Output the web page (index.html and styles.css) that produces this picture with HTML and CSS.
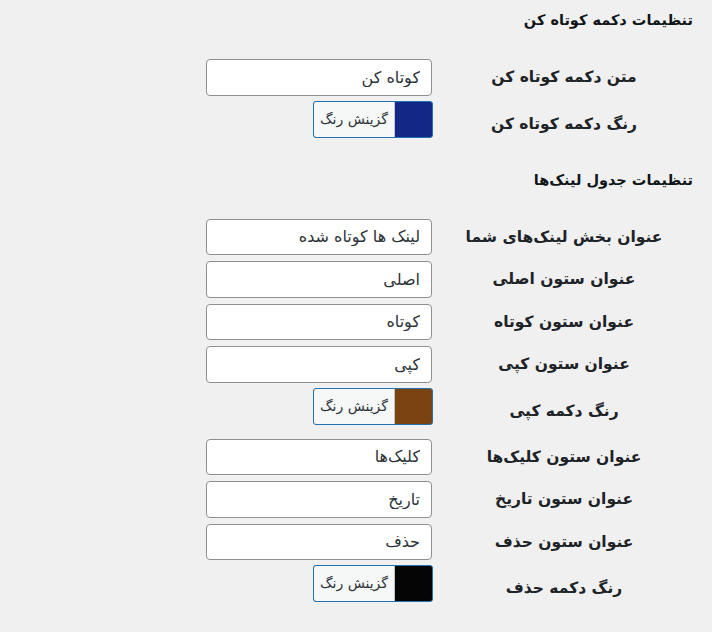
FILE: index.html
```html
<!DOCTYPE html>
<html lang="fa" dir="rtl">
<head>
<meta charset="utf-8">
<title>تنظیمات</title>
<link rel="stylesheet" href="styles.css">
</head>
<body>
<main class="settings">
  <h2 class="section-title title-first">تنظیمات دکمه کوتاه کن</h2>
  <div class="form-table">
    <div class="row">
      <label class="row-label">متن دکمه کوتاه کن</label>
      <div class="row-field"><input class="text-input" type="text" value="کوتاه کن"></div>
    </div>
    <div class="row row-color">
      <label class="row-label">رنگ دکمه کوتاه کن</label>
      <div class="row-field"><button class="color-result" type="button" style="background-color:#132787"><span class="color-result-text">گزینش رنگ</span></button></div>
    </div>
  </div>

  <h2 class="section-title title-second">تنظیمات جدول لینک‌ها</h2>
  <div class="form-table">
    <div class="row">
      <label class="row-label">عنوان بخش لینک‌های شما</label>
      <div class="row-field"><input class="text-input" type="text" value="لینک ها کوتاه شده"></div>
    </div>
    <div class="row">
      <label class="row-label">عنوان ستون اصلی</label>
      <div class="row-field"><input class="text-input" type="text" value="اصلی"></div>
    </div>
    <div class="row">
      <label class="row-label">عنوان ستون کوتاه</label>
      <div class="row-field"><input class="text-input" type="text" value="کوتاه"></div>
    </div>
    <div class="row">
      <label class="row-label">عنوان ستون کپی</label>
      <div class="row-field"><input class="text-input" type="text" value="کپی"></div>
    </div>
    <div class="row row-color">
      <label class="row-label">رنگ دکمه کپی</label>
      <div class="row-field"><button class="color-result" type="button" style="background-color:#7a4412"><span class="color-result-text">گزینش رنگ</span></button></div>
    </div>
    <div class="row">
      <label class="row-label">عنوان ستون کلیک‌ها</label>
      <div class="row-field"><input class="text-input" type="text" value="کلیک‌ها"></div>
    </div>
    <div class="row">
      <label class="row-label">عنوان ستون تاریخ</label>
      <div class="row-field"><input class="text-input" type="text" value="تاریخ"></div>
    </div>
    <div class="row">
      <label class="row-label">عنوان ستون حذف</label>
      <div class="row-field"><input class="text-input" type="text" value="حذف"></div>
    </div>
    <div class="row row-color">
      <label class="row-label">رنگ دکمه حذف</label>
      <div class="row-field"><button class="color-result" type="button" style="background-color:#050505"><span class="color-result-text">گزینش رنگ</span></button></div>
    </div>
  </div>
</main>
</body>
</html>
```
FILE: styles.css
```css
html, body {
  margin: 0;
  padding: 0;
  background: #f0f0f1;
}

body {
  font-family: "DejaVu Sans", sans-serif;
  color: #1d2327;
  direction: rtl;
  width: 712px;
  height: 632px;
  overflow: hidden;
}

.settings {
  padding: 0 19px 0 0;
}

.section-title {
  margin: 0;
  font-size: 14.5px;
  font-weight: bold;
  line-height: 20px;
  color: #101517;
}

.title-first {
  padding-top: 10px;
}

.title-second {
  margin-top: 21px;
}

.form-table {
  margin-top: 26px;
}

.row {
  display: grid;
  grid-template-columns: 258px 229px;
  align-items: center;
}

.row-label {
  text-align: center;
  font-size: 15.5px;
  font-weight: bold;
  line-height: 20px;
  color: #1d2327;
}

.row-field {
  padding: 3px 3px 3px 0;
  display: flex;
  justify-content: flex-start;
}

.row-color .row-field {
  padding: 2px 3px 11px 0;
}

.text-input {
  box-sizing: border-box;
  width: 226px;
  height: 36.5px;
  margin: 0;
  padding: 0 11px;
  border: 1px solid #8c8f94;
  border-radius: 4px;
  background: #fff;
  font-family: "DejaVu Sans", sans-serif;
  font-size: 16px;
  color: #2c3338;
  direction: rtl;
  text-align: right;
}

.color-result {
  box-sizing: border-box;
  width: 120px;
  height: 37px;
  margin: 0 -1px 0 0;
  padding: 0 37px 0 0;
  border: 1px solid #2271b1;
  border-radius: 3px;
  display: flex;
  direction: rtl;
}

.color-result-text {
  flex: 1;
  background: #f6f7f7;
  border-right: 1px solid #c3c4c7;
  border-radius: 2px 0 0 2px;
  font-family: "DejaVu Sans", sans-serif;
  font-size: 14px;
  line-height: 35px;
  color: #2c3338;
  text-align: center;
}
```
